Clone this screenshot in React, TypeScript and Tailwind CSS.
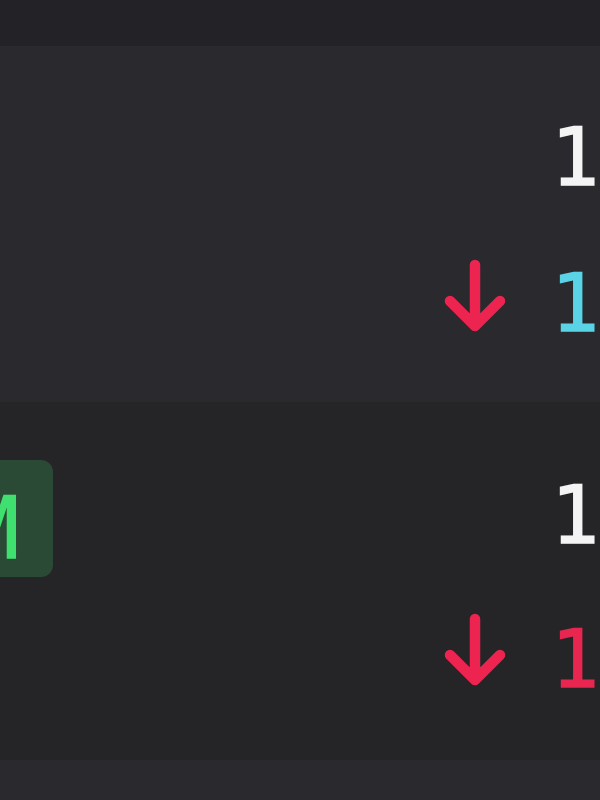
import React from "react";

const mono = { fontFamily: '"DejaVu Sans Mono", "Liberation Mono", monospace' };

function Arrow({ color }: { color: string }) {
  return (
    <svg width="62" height="74" viewBox="0 0 62 74" className="shrink-0">
      <path
        d="M31 6 V67 M6 42 L31 67 L56 42"
        fill="none"
        stroke={color}
        strokeWidth="10.5"
        strokeLinecap="round"
        strokeLinejoin="round"
      />
    </svg>
  );
}

export default function App() {
  return (
    <div className="w-[600px] h-[800px] overflow-hidden flex flex-col bg-[#29292e]" style={mono}>
      <div className="h-[46px] shrink-0 bg-[#232327]" />
      <div className="h-[356px] shrink-0 bg-[#29292e] flex">
        <div className="ml-[444px] pt-[72px] flex flex-col gap-[66px] whitespace-nowrap">
          <div className="pl-[107px] text-[80px] leading-none text-[#f4f4f4] [-webkit-text-stroke:1.5px_currentColor]">1</div>
          <div className="flex items-start gap-[45px]">
            <div className="-mt-[5px]">
              <Arrow color="#ee2450" />
            </div>
            <div className="text-[80px] leading-none text-[#5ad3e6] [-webkit-text-stroke:1.5px_currentColor]">1</div>
          </div>
        </div>
      </div>
      <div className="h-[358px] shrink-0 bg-[#252528] flex">
        <div className="-ml-[47px] mt-[58px] w-[100px] h-[117px] shrink-0 rounded-[12px] bg-[#2b4a36] flex items-start justify-end pr-[34px] pt-[26px]">
          <span className="text-[85px] leading-none text-[#3fe06f] [-webkit-text-stroke:1.5px_currentColor]">M</span>
        </div>
        <div className="ml-[391px] pt-[74px] flex flex-col gap-[64px] whitespace-nowrap">
          <div className="pl-[107px] text-[80px] leading-none text-[#f4f4f4] [-webkit-text-stroke:1.5px_currentColor]">1</div>
          <div className="flex items-start gap-[45px]">
            <div className="-mt-[7px]">
              <Arrow color="#ee2450" />
            </div>
            <div className="text-[80px] leading-none text-[#e8264f] [-webkit-text-stroke:1.5px_currentColor]">1</div>
          </div>
        </div>
      </div>
      <div className="flex-1 bg-[#29292e]" />
    </div>
  );
}
